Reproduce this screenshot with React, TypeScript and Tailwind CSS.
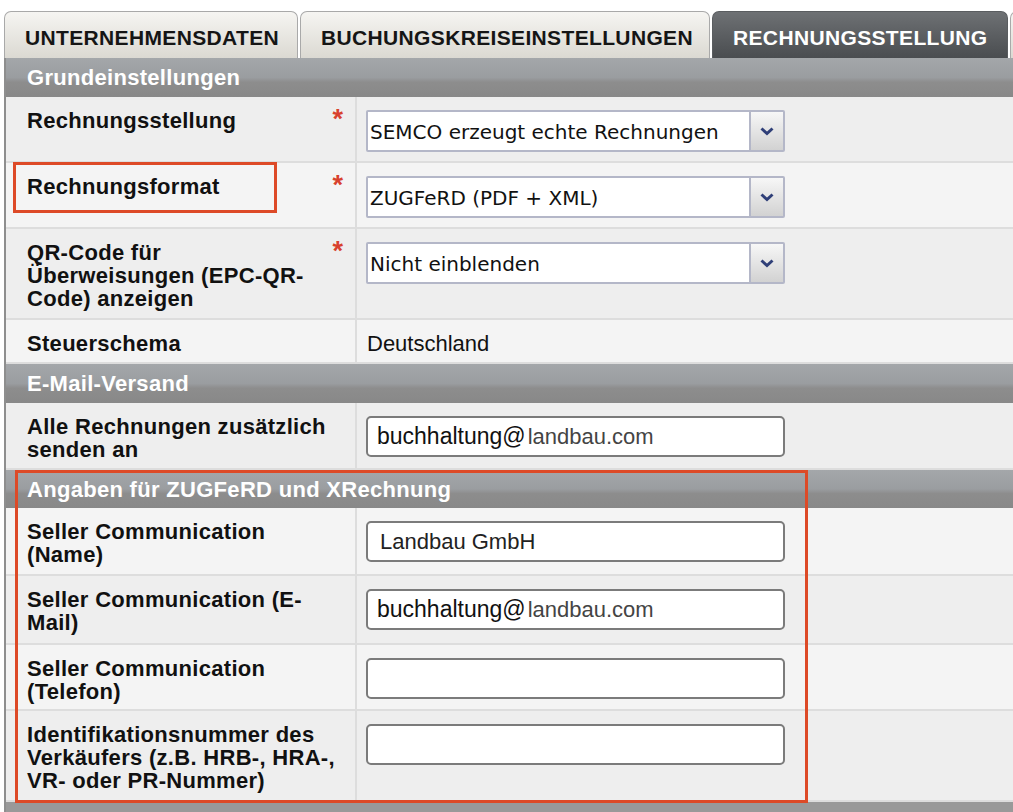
import type { ReactNode } from 'react'

const labelFont = { fontFamily: '"Liberation Sans", Arial, sans-serif' }

function Tab({ children, active, className }: { children?: ReactNode; active?: boolean; className: string }) {
  return (
    <div
      className={`flex h-full shrink-0 items-center rounded-t-[7px] border border-b-0 pl-[20px] pt-[5px] text-[21px] font-bold tracking-[0.35px] ${
        active
          ? 'border-[#5a5d60] bg-gradient-to-b from-[#6e7174] to-[#4a4d50] text-white'
          : 'border-[#a9a9a9] bg-gradient-to-b from-[#f6f5f2] to-[#dbd9d2] text-[#151515]'
      } ${className}`}
    >
      {children}
    </div>
  )
}

function Header({ title }: { title: string }) {
  return (
    <div className="flex h-[39px] items-center bg-[linear-gradient(to_bottom,#a4a7aa_0%,#9a9da0_50%,#8d8d8d_62%,#888888_100%)] pl-[21px] text-[22px] font-bold tracking-[0.3px] text-white">
      {title}
    </div>
  )
}

function Row({
  label,
  required,
  bg,
  h,
  children,
  overlay,
}: {
  label: ReactNode
  required?: boolean
  bg: string
  h: string
  children?: ReactNode
  overlay?: ReactNode
}) {
  return (
    <div className={`grid grid-cols-[349px_1fr] border-b-2 border-[#dddddd] ${bg} ${h}`}>
      <div className="relative flex justify-between pl-[21px] pr-[12px] pt-[12px]">
        <div className="text-[22px] font-bold leading-[23px] tracking-[0.3px] text-[#111]">{label}</div>
        {required && (
          <span className="-mt-[1px] text-[27px] font-bold leading-[23px] text-[#d8412d]">*</span>
        )}
        {overlay}
      </div>
      <div className="border-l-2 border-[#dddddd] pl-[9px] pt-[13px]">{children}</div>
    </div>
  )
}

function Select({ value }: { value: string }) {
  return (
    <div className="flex h-[42px] w-[419px] overflow-hidden rounded-[2px] border-2 border-[#b4b7c8] bg-white">
      <div
        className="flex flex-1 items-center pl-[2px] pt-[1px] text-[20px] text-[#111]"
        style={{ fontFamily: '"DejaVu Sans", Verdana, sans-serif' }}
      >
        {value}
      </div>
      <div className="flex w-[34px] items-center justify-center border-l-2 border-[#b4b7c8] bg-gradient-to-b from-[#f7f7f7] to-[#d2d2d2]">
        <svg width="14" height="9" viewBox="0 0 14 9">
          <polyline points="1.5,1.5 7,6.5 12.5,1.5" fill="none" stroke="#2f3f78" strokeWidth="3" />
        </svg>
      </div>
    </div>
  )
}

function Input({ children, pad = 'pl-[9px]' }: { children?: ReactNode; pad?: string }) {
  return (
    <div className={`flex h-[41px] w-[419px] items-center rounded-[5px] border-2 border-[#7b7b7b] bg-white text-[22px] text-[#222] ${pad}`}>
      {children}
    </div>
  )
}

function Mail() {
  return (
    <>
      <span className="text-[23px] text-[#111]">buchhaltung@</span>
      <span className="pl-[2px] text-[22px] text-[#444]">landbau.com</span>
    </>
  )
}

export default function App() {
  return (
    <div className="min-h-[812px] bg-white pl-[4px] pt-[11px]" style={labelFont}>
      {/* Reiter */}
      <div className="flex h-[47px] gap-[2px] overflow-hidden">
        <Tab className="w-[294px]">UNTERNEHMENSDATEN</Tab>
        <Tab className="w-[410px]">BUCHUNGSKREISEINSTELLUNGEN</Tab>
        <Tab active className="w-[296px]">RECHNUNGSSTELLUNG</Tab>
        <Tab className="w-[40px]" />
      </div>

      <div className="border-l-2 border-[#8e8e8e]">
        {/* Grundeinstellungen */}
        <Header title="Grundeinstellungen" />
        <Row label="Rechnungsstellung" required bg="bg-[#eeeeee]" h="h-[66px]">
          <Select value="SEMCO erzeugt echte Rechnungen" />
        </Row>
        <Row
          label="Rechnungsformat"
          required
          bg="bg-[#f4f4f4]"
          h="h-[66px]"
          overlay={
            <div className="pointer-events-none absolute left-[7px] top-[-1px] h-[51px] w-[264px] border-[3px] border-[#dd4a27]" />
          }
        >
          <Select value="ZUGFeRD (PDF + XML)" />
        </Row>
        <Row
          label={
            <>
              QR-Code für
              <br />
              Überweisungen (EPC-QR-
              <br />
              Code) anzeigen
            </>
          }
          required
          bg="bg-[#eeeeee]"
          h="h-[91px]"
        >
          <Select value="Nicht einblenden" />
        </Row>
        <Row label="Steuerschema" bg="bg-[#f4f4f4]" h="h-[44px]">
          <div className="-mt-[1px] pl-[1px] text-[22px] leading-[23px] text-[#111]">Deutschland</div>
        </Row>

        {/* E-Mail-Versand */}
        <Header title="E-Mail-Versand" />
        <Row
          label={
            <>
              Alle Rechnungen zusätzlich
              <br />
              senden an
            </>
          }
          bg="bg-[#eeeeee]"
          h="h-[67px]"
        >
          <Input>
            <Mail />
          </Input>
        </Row>

        {/* ZUGFeRD / XRechnung */}
        <div className="relative">
          <div className="[&>div:first-child]:h-[38px]">
            <Header title="Angaben für ZUGFeRD und XRechnung" />
          </div>
          <Row
            label={
              <>
                Seller Communication
                <br />
                (Name)
              </>
            }
            bg="bg-[#f4f4f4]"
            h="h-[68px]"
          >
            <Input pad="pl-[12px]">Landbau GmbH</Input>
          </Row>
          <Row
            label={
              <>
                Seller Communication (E-
                <br />
                Mail)
              </>
            }
            bg="bg-[#eeeeee]"
            h="h-[69px]"
          >
            <Input>
              <Mail />
            </Input>
          </Row>
          <Row
            label={
              <>
                Seller Communication
                <br />
                (Telefon)
              </>
            }
            bg="bg-[#f4f4f4]"
            h="h-[66px]"
          >
            <Input />
          </Row>
          <Row
            label={
              <>
                Identifikationsnummer des
                <br />
                Verkäufers (z.B. HRB-, HRA-,
                <br />
                VR- oder PR-Nummer)
              </>
            }
            bg="bg-[#eeeeee]"
            h="h-[91px]"
          >
            <Input />
          </Row>
          <div className="pointer-events-none absolute left-[9px] top-0 h-[333px] w-[793px] border-[3px] border-[#dd4a27]" />
        </div>

        <div className="h-[40px] bg-[#999999]" />
      </div>
    </div>
  )
}
